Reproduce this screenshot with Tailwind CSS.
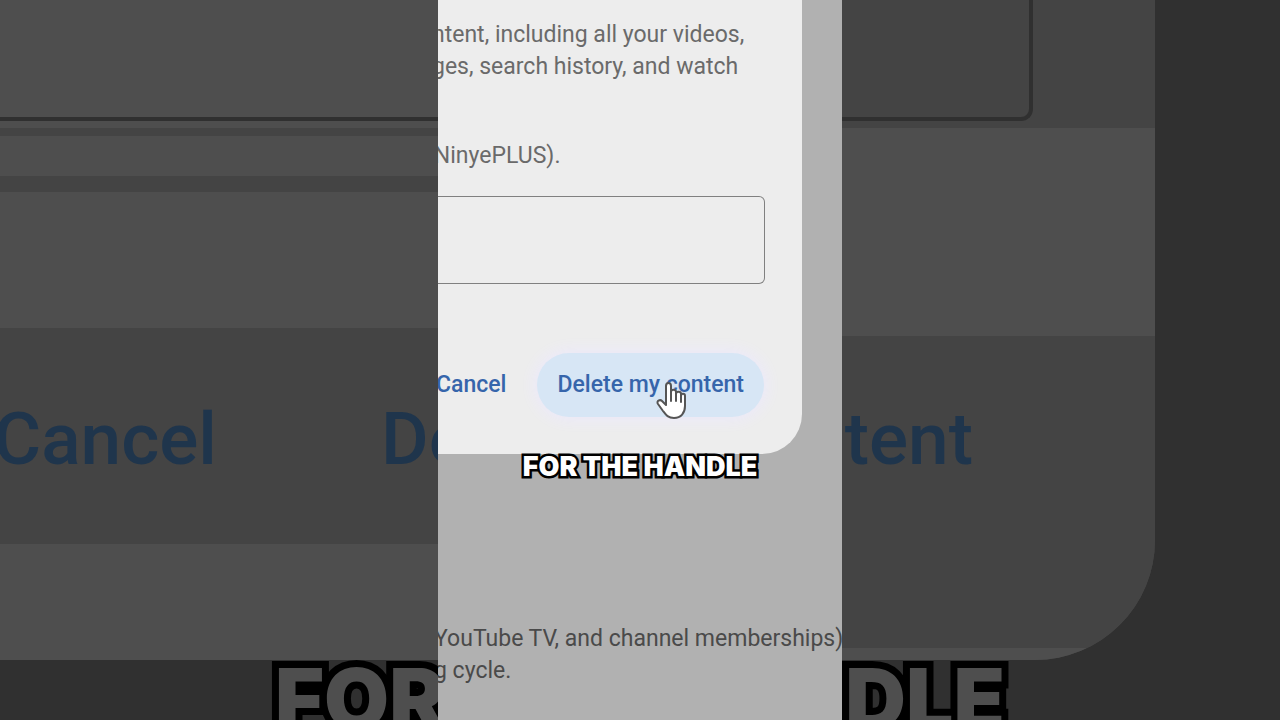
<!DOCTYPE html>
<html lang="en">
<head>
  <meta charset="UTF-8" />
  <meta name="viewport" content="width=device-width, initial-scale=1.0"/>
  <title>Delete my content</title>

  <script src="https://cdn.jsdelivr.net/npm/@tailwindcss/browser@4"></script>
</head>
<body class="relative min-h-screen overflow-hidden bg-[#303030] font-['Roboto',sans-serif]">

  <!-- Enlarged, dimmed dialog behind the strip -->
  <div class="absolute inset-0 overflow-hidden" aria-hidden="true">
    <div class="relative mr-[125px] flex flex-col overflow-hidden rounded-br-[120px] bg-[#444444] pb-[118px]">
      <div class="absolute inset-0 flex">
        <div class="flex-1 bg-[linear-gradient(#4e4e4e_128px,#444_128px,#444_136px,#4e4e4e_136px,#4e4e4e_176px,#444_176px,#444_192px,#4e4e4e_192px,#4e4e4e_328px,#444_328px,#444_544px,#4e4e4e_544px)]"></div>
        <div class="flex-1 bg-[linear-gradient(#444_128px,#4e4e4e_128px,#4e4e4e_336px,#444_336px,#444_648px,#4e4e4e_648px)]"></div>
      </div>
      <div class="relative mr-[122px] h-[121px] rounded-br-xl border-r-4 border-b-4 border-[#303030]"></div>
      <div class="relative mt-[216px] flex h-[205px] items-center justify-end gap-[164px] pr-[182px] text-[73px] font-medium whitespace-nowrap text-[#1f354c]">
        <span>Cancel</span>
        <span>Delete my content</span>
      </div>
    </div>
    <p class="absolute inset-x-0 top-[649px] text-center font-['Inter',sans-serif] text-[84px] leading-[100px] font-black whitespace-nowrap text-[#4e4e4e] [-webkit-text-stroke:14px_black] [paint-order:stroke_fill]">FOR THE HANDLE</p>
  </div>

  <!-- Main strip -->
  <main class="relative mx-auto min-h-screen w-full max-w-[404px] overflow-hidden bg-[#b1b1b1] text-[23px] leading-8 whitespace-nowrap">
    <section class="mr-10 rounded-br-[40px] bg-[#ededed] pt-[19px] pb-[37px] text-[#6a6a6a]">
      <p class="-ml-1.5">ntent, including all your videos,<br>ges, search history, and watch</p>
      <label for="handle" class="mt-[57px] -ml-3 block">(NinyePLUS).</label>
      <div class="mt-6 pr-[37px]">
        <input id="handle" type="text" class="block h-[88px] w-full rounded-r-md border border-l-0 border-[#808080] px-4 outline-none">
      </div>
      <div class="mt-[69px] flex justify-end gap-[31px] pr-[38px] font-medium text-[#3665ab]">
        <button type="button">Cancel</button>
        <button type="button" class="h-16 rounded-full bg-[#d7e6f5] px-5 shadow-[0_0_16px_2px_#ece9fc]">Delete my content</button>
      </div>
    </section>

    <p class="mt-[169px] -ml-1 text-[#4a4a4a]">YouTube TV, and channel memberships)<br>g cycle.</p>

    <!-- Caption -->
    <p class="absolute inset-x-0 top-[451px] text-center font-['Inter',sans-serif] text-[27px] leading-8 font-black text-white [-webkit-text-stroke:5px_black] [paint-order:stroke_fill]">FOR THE HANDLE</p>

    <!-- Hand cursor -->
    <svg class="absolute top-[380px] left-[218px] h-10 w-8" viewBox="0 0 32 40" fill="#fff" stroke="#555" stroke-width="2" stroke-linejoin="round" stroke-linecap="round">
      <path d="M10 25V6c0-4 5-4 5 0v10-4c0-3 5-3 5 0v5-3c0-3 5-3 5 0v4-2c0-3 4-3 4 0v10c0 7-4 12-11 12-6 0-8-3-11-7l-5-7c-2-3 2-5 4-3z"/>
      <path d="M15 13v8M20 14v7M25 16v6" fill="none"/>
    </svg>
  </main>
</body>
</html>
